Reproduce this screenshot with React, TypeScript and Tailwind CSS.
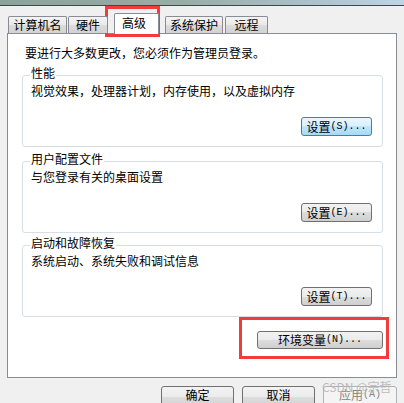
const btn =
  'flex items-center justify-center rounded-[3px] border border-[#707070] bg-[linear-gradient(#f2f2f2,#ebebeb_50%,#dddddd_50%,#cfcfcf)] text-[12px] leading-[14px] text-black';
const btnHot =
  'flex items-center justify-center rounded-[3px] border border-[#3c7fb1] bg-[linear-gradient(#eaf6fd,#d9f0fc_50%,#bee6fd_50%,#a7d9f5)] text-[12px] leading-[14px] text-black';
const tab =
  'flex h-[17px] items-center justify-center rounded-t-[2px] border border-b-0 border-[#898c95] bg-[linear-gradient(#f4f4f4,#e9e9e9_50%,#dcdcdc_50%,#d2d2d2)] text-[12px] leading-[14px]';

function Label({ zh, key: _k, hot }: { zh: string; key?: string; hot?: string }) {
  return (
    <span className="flex items-center">
      <span>{zh}</span>
      <span className="font-['Liberation_Mono',monospace] text-[10px] tracking-[0px]">{hot}</span>
    </span>
  );
}

function Group({
  title,
  text,
  hot,
  focused,
  mt,
}: {
  title: string;
  text: string;
  hot: string;
  focused?: boolean;
  mt: string;
}) {
  return (
    <div className={`${mt} flex h-[72px] flex-col rounded-[3px] border border-[#d5dfe5]`}>
      <div className="-mt-[11px] ml-[7px] h-[16px] w-fit bg-white px-[1px] leading-[16px]">{title}</div>
      <div className="ml-[8px] mt-[2px] h-[16px] leading-[16px]">{text}</div>
      <div className="mt-auto mb-[10px] mr-[10px] self-end">
        <div className={`${focused ? btnHot : btn} h-[19px] w-[71px]`}>
          <Label zh="设置" hot={hot} />
        </div>
      </div>
    </div>
  );
}

export default function App() {
  return (
    <div className="relative h-[403px] w-[404px] overflow-hidden bg-[#f0f0f0] font-['Noto_Sans_CJK_SC','Liberation_Sans',sans-serif] text-[12px] text-black">
      {/* window frame strip */}
      <div className="h-[6px] border-b border-[#3c4a50] bg-[linear-gradient(to_right,#8aa39b,#98ada6_45%,#a9c0c8_75%,#bdd5e5)]" />

      {/* tabs */}
      <div className="relative z-10 flex items-end pl-[8px] pt-[7px]">
        <div className={`${tab} w-[59px]`}>计算机名</div>
        <div className={`${tab} ml-[1px] w-[40px]`}>硬件</div>
        <div className="relative -mb-px ml-[6px] flex h-[21px] w-[45px] items-start rounded-t-[2px] border border-b-0 border-[#898c95] bg-white pl-[7px] pt-[1px] leading-[16px]">
          高级
        </div>
        <div className={`${tab} ml-[6px] w-[58px]`}>系统保护</div>
        <div className={`${tab} ml-[2px] w-[43px]`}>远程</div>
      </div>

      {/* tab panel */}
      <div className="ml-[7px] flex h-[345px] w-[390px] flex-col border border-[#898c95] bg-white pl-[14px] pr-[13px] pt-[11px]">
        <div className="ml-[3px] h-[16px] leading-[16px]">要进行大多数更改，您必须作为管理员登录。</div>
        <Group mt="mt-[14px]" title="性能" text="视觉效果，处理器计划，内存使用，以及虚拟内存" hot="(S)..." focused />
        <Group mt="mt-[14px]" title="用户配置文件" text="与您登录有关的桌面设置" hot="(E)..." />
        <Group mt="mt-[12px]" title="启动和故障恢复" text="系统启动、系统失败和调试信息" hot="(T)..." />
        <div className="mt-[14px] flex justify-end">
          <div className={`${btn} h-[18px] w-[126px]`}>
            <Label zh="环境变量" hot="(N)..." />
          </div>
        </div>
      </div>

      {/* dialog buttons */}
      <div className="mt-[8px] flex justify-end gap-[8px] pr-[7px]">
        <div className={`${btn} h-[23px] w-[73px] !items-start pt-[1px]`}>确定</div>
        <div className={`${btn} h-[23px] w-[73px] !items-start pt-[1px]`}>取消</div>
        <div className="flex h-[23px] w-[74px] items-start justify-center rounded-[3px] border border-[#adb2b5] bg-[#f4f4f4] pt-[1px] leading-[14px] text-[#838383]">
          <Label zh="应用" hot="(A)" />
        </div>
      </div>

      {/* annotations */}
      <div className="absolute left-[105px] top-[6px] h-[31px] w-[55px] border-[3px] border-[#f23b3b]" />
      <div className="absolute left-[239px] top-[317px] h-[42px] w-[150px] border-[3px] border-[#f23b3b]" />
      <div className="absolute left-[322px] top-[380px] text-[12px] leading-[14px] text-[#b4b4b4]/90">CSDN @宗哲</div>
    </div>
  );
}
